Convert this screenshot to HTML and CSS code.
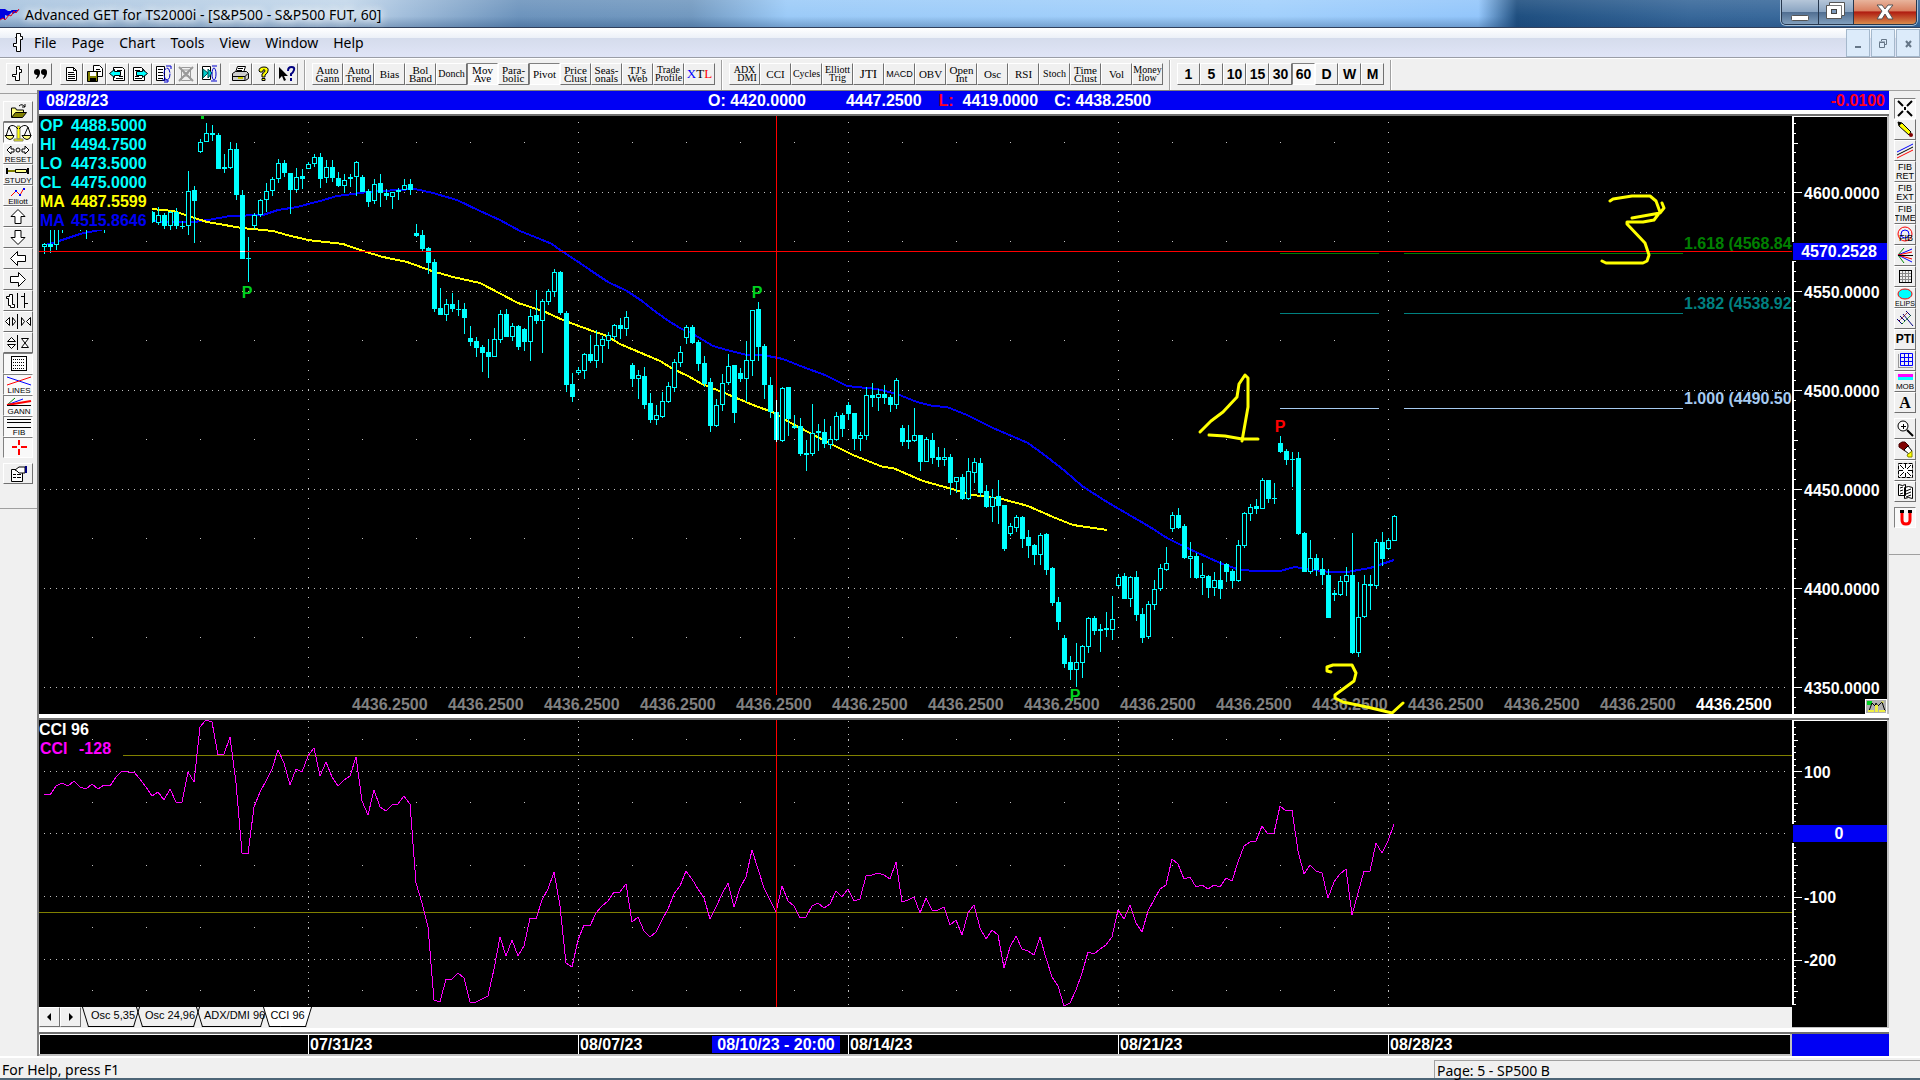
FILE: index.html
```
<!DOCTYPE html>
<html lang="en">
<head>
    <meta charset="UTF-8">
    <meta name="viewport" content="width=device-width, initial-scale=1.0">
    <title>Advanced GET for TS2000i - [S&amp;P500 - S&amp;P500 FUT, 60]</title>
    <link rel="stylesheet" href="styles.css">
</head>
<body>
    <header class="titlebar">
        <svg class="app-icon" width="20" height="16" viewBox="0 0 20 16"><path d="M0 2h5l3 2h5l-5 5-3-1v4H0z" fill="#0000e0"/><path d="M11 3h8l-6 4z" fill="#0000e0"/><path d="M0 13l3-2 2 2 4-5 2 1 3-5 2 2 3-4" fill="none" stroke="#e00020"/></svg>
        <h1 class="title">Advanced GET for TS2000i - [S&amp;P500 - S&amp;P500 FUT, 60]</h1>
        <div class="caption-buttons">
            <button class="cap cap-min" aria-label="Minimize"><svg width="36" height="28" viewBox="0 0 36 28"><rect x="9.500" y="17.500" width="17" height="5" rx="1" fill="#fff" stroke="#555"/></svg></button>
            <button class="cap cap-max" aria-label="Restore"><svg width="34" height="28" viewBox="0 0 34 28"><path d="M10.500 4.500h15v13h-3v3h-15v-13h3z" fill="#fff" stroke="#555"/><path d="M10.500 7.500h12v10" fill="none" stroke="#777"/><rect x="12.500" y="11.500" width="5" height="4" fill="#7c99bb" stroke="#444"/></svg></button>
            <button class="cap cap-close" aria-label="Close"><svg width="62" height="28" viewBox="0 0 62 28"><path d="M23 7h5l3 4 3-4h5l-5 6 5 8h-5l-3-5-3 5h-5l5-8z" fill="#fff" stroke="#555"/></svg></button>
        </div>
    </header>

    <nav class="menubar">
        <svg width="12" height="20" viewBox="0 0 12 20"><path d="M4.500 4.500h1v-4h4v3h2v3h-2v12h-4v-5h-3v-3h3v-6z" fill="#fff" stroke="#000"/></svg>
        <button class="menu">File</button>
        <button class="menu">Page</button>
        <button class="menu">Chart</button>
        <button class="menu">Tools</button>
        <button class="menu">View</button>
        <button class="menu">Window</button>
        <button class="menu">Help</button>
        <div class="mdi-buttons">
            <button class="mdi" aria-label="Minimize chart"><svg width="22" height="26" viewBox="0 0 22 26"><path d="M8 17h6" stroke="#667788" stroke-width="2"/></svg></button>
            <button class="mdi" aria-label="Restore chart"><svg width="22" height="26" viewBox="0 0 22 26"><path d="M9.500 11v-1.500h5v5H13M7.500 12.500h5v5h-5zM7 12h6" fill="none" stroke="#667788"/></svg></button>
            <button class="mdi" aria-label="Close chart"><svg width="22" height="26" viewBox="0 0 22 26"><path d="M9 11l5 6M14 11l-5 6" stroke="#667788" stroke-width="2"/></svg></button>
        </div>
    </nav>

    <div class="toolbar">
        <div class="tool-group">
            <button class="btn" aria-label="Symbol"><svg width="21" height="20" viewBox="0 0 21 20"><path d="M9.500 5.500v-3h3v3h2v3h-2v8h-4v-4h-3v-2h4z" fill="#fff" stroke="#000"/></svg></button>
            <button class="btn" aria-label="Quote"><svg width="21" height="20" viewBox="0 0 21 20"><g fill="#000"><circle cx="7" cy="8" r="3"/><circle cx="14" cy="8" r="3"/><path d="M10 8q0 5-4 7v-1q2-2 1-4zM17 8q0 5-4 7v-1q2-2 1-4z"/></g></svg></button>
        </div>
        <div class="tool-group">
            <button class="btn" aria-label="New"><svg width="21" height="20" viewBox="0 0 21 20"><path d="M5.500 3.500h7l3 3v10h-10z" fill="#fff" stroke="#000"/><path d="M12.500 3.500v3h3M7 8.500h6M7 10.500h7M7 12.500h7M7 14.500h7" fill="none" stroke="#000"/></svg></button>
            <button class="btn" aria-label="Save"><svg width="21" height="20" viewBox="0 0 21 20"><path d="M9.500 1.500h6l3 3v8h-9z" fill="#fff" stroke="#000"/><path d="M12 5.500h4M12 7.500h5" stroke="#000"/><path d="M3.500 7.500h10v10h-10z" fill="#808000" stroke="#000"/><path d="M6 8h6v4H6z" fill="#fff"/><path d="M6 14h6v3H6z"/></svg></button>
            <button class="btn" aria-label="Previous page"><svg width="21" height="20" viewBox="0 0 21 20"><path d="M6.500 3.500h9l2 2v11h-11z" fill="#fff" stroke="#000"/><path d="M10 6.500h5M12 12.500h4M9 14.500h7" stroke="#000"/><path d="M2.500 9.500l5-4v2h6v4h-6v2z" fill="#0ff" stroke="#000"/></svg></button>
            <button class="btn" aria-label="Next page"><svg width="21" height="20" viewBox="0 0 21 20"><path d="M3.500 3.500h8l3 3v10h-11z" fill="#fff" stroke="#000"/><path d="M5 6.500h5M5 12.500h4M5 14.500h7" stroke="#000"/><path d="M17.500 9.500l-5-4v2h-6v4h6v2z" fill="#0ff" stroke="#000"/></svg></button>
            <button class="btn" aria-label="Cycle page"><svg width="21" height="20" viewBox="0 0 21 20"><path d="M3.500 2.500h8v14h-8z" fill="#fff" stroke="#000"/><path d="M5 5.500h5M5 8.500h5M5 11.500h5M5 14.500h5" stroke="#000"/><ellipse cx="14" cy="10" rx="3" ry="6" fill="none" stroke="#0000d0" stroke-dasharray="6 1"/><path d="M9 16h6v2h-4M13 2h5v3" fill="none" stroke="#0000d0"/></svg></button>
            <button class="btn" aria-label="Delete page"><svg width="21" height="20" viewBox="0 0 21 20"><path d="M5.500 3.500h9v13h-9zM7 6h6M7 9h6M7 12h6" fill="none" stroke="#999"/><path d="M3 3l14 14M17 3L3 17" stroke="#999" stroke-width="2"/></svg></button>
            <button class="btn" aria-label="Page set"><svg width="21" height="20" viewBox="0 0 21 20"><path d="M3.500 2.500h8v13h-8z" fill="#fff" stroke="#000"/><path d="M4 5l5 4-5 5zM9 5l4 4-4 5z" fill="#0cc" stroke="#055"/><ellipse cx="15" cy="10" rx="2" ry="6" fill="none" stroke="#0000d0"/><path d="M12 17h6M13 2h5" stroke="#0000d0"/></svg></button>
        </div>
        <div class="tool-group">
            <button class="btn" aria-label="Print"><svg width="21" height="20" viewBox="0 0 21 20"><path d="M7.500 2.500h8l-2 6h-8z" fill="#fff" stroke="#000"/><path d="M8 4.500h5M7 6.500h5" stroke="#000"/><path d="M2.500 9.500l3-2h11l2 2v5l-3 2h-13z" fill="#ccc" stroke="#000"/><path d="M3 12.500h12l3-3M15 12v4" fill="none" stroke="#000"/><path d="M8 14h5" stroke="#cc0" stroke-width="2"/></svg></button>
            <button class="btn" aria-label="Help topics"><svg width="21" height="20" viewBox="0 0 21 20"><path d="M6 7q0-4 5-4t4 4q0 2-3 4v2H9v-3q3-2 3-3 0-2-2-1v2H7z" fill="#ff0" stroke="#000"/><path d="M9 14.500h3v2H9z" fill="#ff0" stroke="#000"/></svg></button>
            <button class="btn" aria-label="Context help"><svg width="21" height="20" viewBox="0 0 21 20"><path d="M3 3v12l3-3 2 5 2-1-2-4h4z"/><path d="M12 7q0-4 3.500-4T18 6t-3 4v2M15 14v3" fill="none" stroke="#000080" stroke-width="2"/></svg></button>
        </div>
        <span class="separator"></span>
        <div class="tool-group">
            <button class="btn study">Auto<br>Gann</button>
            <button class="btn study">Auto<br>Trend</button>
            <button class="btn study">Bias</button>
            <button class="btn study">Bol<br>Band</button>
            <button class="btn study small">Donch</button>
            <button class="btn study pressed">Mov<br>Ave</button>
            <button class="btn study">Para-<br>bolic</button>
            <button class="btn study pressed">Pivot</button>
            <button class="btn study">Price<br>Clust</button>
            <button class="btn study">Seas-<br>onals</button>
            <button class="btn study">TJ's<br>Web</button>
            <button class="btn study small">Trade<br>Profile</button>
            <button class="btn study large"><span><span class="blue">X</span>T<span class="red">L</span></span></button>
        </div>
        <span class="separator"></span>
        <div class="tool-group">
            <button class="btn study small">ADX<br>&nbsp;&nbsp;DMI</button>
            <button class="btn study">CCI</button>
            <button class="btn study small">Cycles</button>
            <button class="btn study small">Elliott<br>Trig</button>
            <button class="btn study large">JTI</button>
            <button class="btn study macd">MACD</button>
            <button class="btn study">OBV</button>
            <button class="btn study">Open<br>Int</button>
            <button class="btn study">Osc</button>
            <button class="btn study">RSI</button>
            <button class="btn study small">Stoch</button>
            <button class="btn study">Time<br>Clust</button>
            <button class="btn study">Vol</button>
            <button class="btn study small">Money<br>flow</button>
        </div>
        <span class="separator"></span>
        <div class="tool-group">
            <button class="btn period">1</button>
            <button class="btn period">5</button>
            <button class="btn period">10</button>
            <button class="btn period">15</button>
            <button class="btn period">30</button>
            <button class="btn period pressed">60</button>
            <button class="btn period">D</button>
            <button class="btn period">W</button>
            <button class="btn period">M</button>
        </div>
        <span class="separator"></span>
    </div>

    <main class="workspace">
        <aside class="side side-left">
            <button class="side-btn" aria-label="Open"><svg width="28" height="19" viewBox="0 0 28 19"><path d="M7.500 15v-9h4l1 2h7v3" fill="#ffff80" stroke="#000"/><path d="M7.500 15.500l4-5h11l-4 5z" fill="#808000" stroke="#000"/><path d="M15 4q3-3 6 1M21 2v3h-3" fill="none" stroke="#000"/></svg></button>
            <button class="side-btn pressed" aria-label="Scales"><svg width="28" height="19" viewBox="0 0 28 19"><path d="M13 3h3v13h-3zM10 16h9v2h-9z" fill="#ff0" stroke="#886"/><path d="M14 6Q9 0 5 4L2 13M5 4l4 9M15 6Q20 0 24 4l-4 9M24 4l3 9" fill="none" stroke="#000"/><path d="M1 12.500h9q-1 4-4 4t-5-4zM18 12.500h9q-1 4-4 4t-5-4z" fill="#ffff80" stroke="#000"/></svg></button>
            <button class="side-btn" aria-label="Reset"><svg width="28" height="19" viewBox="0 0 28 19"><path d="M7 2L3 6l4 4V8h3V5H7zM21 2l4 4-4 4V8h-3V5h3z" fill="#fff" stroke="#000"/><circle cx="14" cy="6" r="2" fill="none" stroke="#000"/><text class="t8" x="14" y="18">RESET</text></svg></button>
            <button class="side-btn" aria-label="Study"><svg width="28" height="19" viewBox="0 0 28 19"><path d="M3 3v6M3 6h8" stroke="#000" stroke-width="2"/><path d="M4 6h7" stroke="#ff0"/><path d="M11.500 4.500h11v3h-11z" fill="#ff8" stroke="#000"/><path d="M24 3v6" stroke="#000" stroke-width="2"/><text class="t8" x="14" y="18">STUDY</text></svg></button>
            <button class="side-btn" aria-label="Elliott"><svg width="28" height="19" viewBox="0 0 28 19"><path d="M7 10l5-5 4 4 4-7" fill="none" stroke="#f00"/><path d="M11 4h2v2h-2zM15 8h2v2h-2zM19 2h2v2h-2z" fill="#00f"/><text class="t8" x="14" y="18">Elliott</text></svg></button>
            <button class="side-btn" aria-label="Scroll up"><svg width="28" height="19" viewBox="0 0 28 19"><path d="M14 2.500l7 7h-4v7h-6v-7H7z" fill="#fff" stroke="#000"/></svg></button>
            <button class="side-btn" aria-label="Scroll down"><svg width="28" height="19" viewBox="0 0 28 19"><path d="M14 16.500l7-7h-4v-7h-6v7H7z" fill="#fff" stroke="#000"/></svg></button>
            <button class="side-btn" aria-label="Scroll left"><svg width="28" height="19" viewBox="0 0 28 19"><path d="M6.500 9.500l7-7v4h8v6h-8v4z" fill="#fff" stroke="#000"/></svg></button>
            <button class="side-btn" aria-label="Scroll right"><svg width="28" height="19" viewBox="0 0 28 19"><path d="M21.500 9.500l-7-7v4h-8v6h8v4z" fill="#fff" stroke="#000"/></svg></button>
            <button class="side-btn" aria-label="Bar width"><svg width="28" height="19" viewBox="0 0 28 19"><path d="M2.500 5.500h3v-2h3v10h2v3h-4v-2h-2v-7h-2z" fill="#fff" stroke="#000"/><path d="M13.500 2v15M20.500 2v15M17 5.500h3M21 12.500h3" stroke="#000"/></svg></button>
            <button class="side-btn" aria-label="Expand horizontally"><svg width="28" height="19" viewBox="0 0 28 19"><path d="M5.500 5.500v8l-4-4zM8.500 5.500v8l3-4zM17.500 5.500v8l3-4zM26.500 5.500v8l-4-4z" fill="#fff" stroke="#000"/><path d="M13.500 2v15" stroke="#000"/></svg></button>
            <button class="side-btn" aria-label="Expand vertically"><svg width="28" height="19" viewBox="0 0 28 19"><path d="M3.500 8.500h8l-4-4zM3.500 11.500h8l-4 4zM17.500 5.500h7l-7 9h7z" fill="#fff" stroke="#000"/><path d="M13.500 2v15" stroke="#000"/></svg></button>
            <button class="side-btn pressed" aria-label="Grid"><svg width="28" height="19" viewBox="0 0 28 19"><rect x="7.500" y="2.500" width="15" height="14" fill="#fff" stroke="#000"/><path d="M9 5.500h12M9 8.500h12M9 11.500h12M9 14.500h12" stroke="#000" stroke-dasharray="1 1"/></svg></button>
            <button class="side-btn pressed" aria-label="Lines"><svg width="28" height="19" viewBox="0 0 28 19"><path d="M3 2l24 8" stroke="#00f"/><path d="M3 10l24-8" stroke="#f00"/><text class="t8" x="15" y="18">LINES</text></svg></button>
            <button class="side-btn pressed" aria-label="Gann"><svg width="28" height="19" viewBox="0 0 28 19"><path d="M3 9l8-7" stroke="#080"/><path d="M3 9l16-6" stroke="#00f"/><path d="M3 9l24-4" stroke="#f00" stroke-width="2"/><path d="M3 9.500h24" stroke="#000"/><text class="t8" x="15" y="18">GANN</text></svg></button>
            <button class="side-btn pressed" aria-label="Fibonacci"><svg width="28" height="19" viewBox="0 0 28 19"><path d="M3 2.500h24M3 5.500h24M3 10.500h24" stroke="#000"/><text class="t8" x="15" y="18">FIB</text></svg></button>
            <button class="side-btn pressed" aria-label="Crosshair"><svg width="28" height="19" viewBox="0 0 28 19"><path d="M15 2v5M15 11v6M8 9h5M17 9h6" stroke="#f00" stroke-width="2"/></svg></button>
            <button class="side-btn after-gap" aria-label="Properties"><svg width="28" height="19" viewBox="0 0 28 19"><path d="M7.500 5.500h11v12h-11z" fill="#fff" stroke="#000"/><path d="M9 10.500h3M13 10.500h4M9 13.500h3M13 13.500h4" stroke="#000"/><path d="M11 6l4-3h6v6h-6l-2-2z" fill="#fff" stroke="#000"/><path d="M22 2v7" stroke="#000080" stroke-width="2"/></svg></button>
        </aside>

        <section class="charts">
            <div class="quote-bar">
                <span class="quote-date">08/28/23</span>
                <div class="quote-values">
                    <span>O: 4420.0000</span>
                    <span class="high">4447.2500</span>
                    <span><span class="alert">L:</span>&nbsp; 4419.0000</span>
                    <span>C: 4438.2500</span>
                </div>
                <span class="alert quote-change">-0.0100</span>
            </div>
            <div class="pane price-pane">
                <svg id="price" class="plot"></svg>
                <div class="scale">
                    <svg id="price-scale"></svg>
                    <button class="scale-btn" aria-label="Auto scale"><svg width="20" height="13" viewBox="0 0 20 13"><path d="M1 1h5v4H1z" fill="#00d020"/><path d="M3 11l3-8 3 3 1-3 2 3 4-4 3 9" fill="none" stroke="#000"/><path d="M9 5h3v7H9zM2 10h6v2H2zM13 10h6v2h-6zM15 2l2-1 1 2z" fill="#ee4"/></svg></button>
                </div>
            </div>
            <div class="pane study-pane">
                <div class="study-main">
                    <svg id="cci" class="plot"></svg>
                    <div class="tabs">
                        <button class="arrow" aria-label="Previous tab"><svg width="19" height="18" viewBox="0 0 19 18"><path d="M11 5v8l-4-4z"/></svg></button>
                        <button class="arrow" aria-label="Next tab"><svg width="19" height="18" viewBox="0 0 19 18"><path d="M8 5v8l4-4z"/></svg></button>
                        <button class="tab tab-osc">Osc 5,35</button>
                        <button class="tab tab-slow">Osc 24,96</button>
                        <button class="tab tab-adx">ADX/DMI 96</button>
                        <button class="tab tab-cci active">CCI 96</button>
                    </div>
                </div>
                <div class="scale scale-study"><svg id="cci-scale"></svg></div>
            </div>
            <div class="pane date-pane">
                <svg id="dates" class="plot"></svg>
                <div class="date-corner"></div>
            </div>
        </section>

        <aside class="side side-right">
            <button class="side-btn pressed" aria-label="Pointer"><svg width="20" height="19" viewBox="0 0 20 19"><path d="M3 2l5 5M17 2l-5 5M3 17l5-5M17 17l-5-5" stroke="#000" stroke-width="2"/><path d="M9 8h2v3H9z" fill="#000"/></svg></button>
            <button class="side-btn" aria-label="Pencil"><svg width="20" height="19" viewBox="0 0 20 19"><path d="M3 2l4 1 9 9-2 3L4 6z" fill="#ff0" stroke="#000"/><path d="M3 2l4 1-3 3z"/><circle cx="16" cy="15" r="2" fill="#800000"/></svg></button>
            <button class="side-btn" aria-label="Parallel lines"><svg width="20" height="19" viewBox="0 0 20 19"><path d="M2 11l16-8" stroke="#00f"/><path d="M2 14l16-8" stroke="#000"/><path d="M2 17l16-8" stroke="#f00"/></svg></button>
            <button class="side-btn text-btn">FIB<br>RET</button>
            <button class="side-btn text-btn">FIB<br>EXT</button>
            <button class="side-btn text-btn">FIB<br>TIME</button>
            <button class="side-btn" aria-label="Fibonacci circles"><svg width="20" height="19" viewBox="0 0 20 19"><circle cx="10" cy="9" r="7" fill="none" stroke="#f00"/><circle cx="10" cy="9" r="4" fill="none" stroke="#00f"/><text class="t9" x="11" y="16">FIB</text></svg></button>
            <button class="side-btn" aria-label="Gann fan"><svg width="20" height="19" viewBox="0 0 20 19"><path d="M3 9l6-7M3 9l6 8" stroke="#080"/><path d="M3 9l14-6M3 9l14 7" stroke="#00f"/><path d="M3 9l14-3M3 9l14 4" stroke="#f00"/><path d="M3 9.500h15" stroke="#000" stroke-width="1"/></svg></button>
            <button class="side-btn" aria-label="Gann box"><svg width="20" height="19" viewBox="0 0 20 19"><path d="M7.500 3v12M10.500 3v12M13.500 3v12M4 6.500h12M4 9.500h12M4 12.500h12" stroke="#888"/><rect x="4.500" y="3.500" width="12" height="12" fill="none" stroke="#000"/></svg></button>
            <button class="side-btn" aria-label="Ellipse"><svg width="20" height="19" viewBox="0 0 20 19"><ellipse cx="10" cy="6" rx="7" ry="5" fill="#0ff" stroke="#f00"/><text class="t7" x="10" y="18">ELIPS</text></svg></button>
            <button class="side-btn" aria-label="Regression channels"><svg width="20" height="19" viewBox="0 0 20 19"><path d="M2 10l5 5M5 7l5 5M8 5l10 12M11 2l5 5" stroke="#000080"/><path d="M4 12l9-9" stroke="#800000" stroke-dasharray="2 1"/><path d="M7 15l9-9" stroke="#008000" stroke-dasharray="2 1"/></svg></button>
            <button class="side-btn text-btn pti">PTI</button>
            <button class="side-btn" aria-label="Table"><svg width="20" height="19" viewBox="0 0 20 19"><path d="M3.500 3v14M4 16.500h14" stroke="#999"/><path d="M5.500 2.500h12v12h-12zM9.500 2v12M13.500 2v12M5 6.500h12M5 10.500h12" fill="none" stroke="#00f"/></svg></button>
            <button class="side-btn" aria-label="MOB"><svg width="20" height="19" viewBox="0 0 20 19"><path d="M3 2h15v3H3z" fill="#f0f"/><path d="M3 5h15v3H3z" fill="#0ff"/><text class="t8" x="10" y="17">MOB</text></svg></button>
            <button class="side-btn text-btn letter">A</button>
            <button class="side-btn after-gap" aria-label="Zoom"><svg width="20" height="19" viewBox="0 0 20 19"><circle cx="8" cy="7" r="5" fill="#fff" stroke="#000"/><path d="M6 7.500h5M8.500 5v5" stroke="#000"/><path d="M12 11l6 6" stroke="#000" stroke-width="2"/></svg></button>
            <button class="side-btn" aria-label="Erase"><svg width="20" height="19" viewBox="0 0 20 19"><path d="M4 4l3-2h3l4 4-4 5-6-4z" fill="#800000" stroke="#400"/><path d="M13 6l4 5-3 3-5-4z" fill="#fff" stroke="#000"/><path d="M17 11v6h-4l-1-2z" fill="#ff0" stroke="#880"/></svg></button>
            <button class="side-btn" aria-label="Fit"><svg width="20" height="19" viewBox="0 0 20 19"><path d="M3.500 2.500h14v14h-14z" fill="#fff" stroke="#000" stroke-dasharray="4 1"/><path d="M5 4l4 4M16 4l-4 4M5 15l4-4M16 15l-4-4" stroke="#000"/><path d="M4 9.500h4M13 9.500h4M10.500 3v4M10.500 12v4" stroke="#000"/></svg></button>
            <button class="side-btn" aria-label="Copy page"><svg width="20" height="19" viewBox="0 0 20 19"><path d="M3.500 2.500l4 1 3-1v11h-7zM9.500 5.500l4-1 4 1v11l-4-1-4 1z" fill="#fff" stroke="#000"/><path d="M5 6l3-1M5 9l3-1M5 12l3-1M11 9l5-2M11 12l5-2M11 15l5-2" stroke="#000"/></svg></button>
            <button class="side-btn pressed after-gap" aria-label="Magnet"><svg width="20" height="19" viewBox="0 0 20 19"><path d="M7 5v7q0 4 4 4t4-4V5" fill="none" stroke="#f00" stroke-width="3"/><path d="M5 2h4v3H5zM13 2h4v3h-4z"/></svg></button>
        </aside>
    </main>

    <footer class="statusbar">
        <span class="status-help">For Help, press F1</span>
        <span class="status-page">Page: 5 - SP500 B</span>
    </footer>

    <script src="chart.js"></script>
</body>
</html>
```
FILE: styles.css
```
* {
    box-sizing: border-box;
}
body {
    margin: 0;
    height: 100vh;
    display: flex;
    flex-direction: column;
    overflow: hidden;
    background-color: #f0f0f0;
    color: #000;
    font-family: "Noto Sans", sans-serif;
    font-size: 14px;
}
button {
    margin: 0;
    padding: 0;
    border: none;
    background: none;
    color: inherit;
    font: inherit;
}
svg {
    display: block;
}

/* window frame */
.titlebar {
    display: flex;
    align-items: flex-start;
    flex: none;
    height: 28px;
    border-bottom: 1px solid #30405c;
    background:
        linear-gradient(rgba(255, 255, 255, 0.1), transparent 60%, rgba(20, 60, 110, 0.3)),
        linear-gradient(90deg, #a9c4df 0, #c3d7ea 18%, #a3bfdc 21%, #6d94bd 27%, #7299c0 36%, #9ccbf8 41%, #a2d0fc 66%, #93c6fb 77%, #1f4f80 79%, #38689a 88%, #3b6b9d 100%);
}
.app-icon {
    margin-top: 7px;
}
.title {
    margin: 0 0 0 5px;
    font-size: 14px;
    font-weight: normal;
    line-height: 30px;
    white-space: nowrap;
    text-shadow: 0 0 8px #fff, 0 0 8px #fff;
}
.caption-buttons {
    display: flex;
    margin-left: auto;
    margin-right: 3px;
    height: 25px;
    border: 1px solid #26374d;
    border-top: none;
    border-radius: 0 0 5px 5px;
    overflow: hidden;
    box-shadow: 0 0 0 1px #a8c0d8;
}
.cap {
    height: 24px;
    background: linear-gradient(#b5c6d9, #8ba5c2 48%, #516f92 52%, #819fbd);
    border-right: 1px solid #26374d;
}
.cap svg {
    margin-top: -2px;
}
.cap-close {
    border-right: none;
    background: linear-gradient(#e8b49c, #d97f60 45%, #b01c10 50%, #d88a4c);
}

/* menu */
.menubar {
    display: flex;
    align-items: center;
    flex: none;
    height: 30px;
    padding-left: 11px;
    background: linear-gradient(#fff, #edf1f8 33%, #d5dcec 36%, #e0e5f7);
    border-bottom: 1px solid #9a9da6;
}
.menu {
    margin-left: 11px;
    line-height: 26px;
}
.menu + .menu {
    margin-left: 15px;
}
.mdi-buttons {
    display: flex;
    gap: 1px;
    margin-left: auto;
}
.mdi {
    border: 1px solid #a4b8cc;
    background-color: #dcebfa;
}

/* top toolbar */
.toolbar {
    display: flex;
    align-items: stretch;
    flex: none;
    height: 32px;
    padding-left: 6px;
    border-top: 1px solid #fff;
}
.tool-group {
    display: flex;
    align-items: flex-start;
    padding-top: 4px;
    margin-right: 8px;
}
.separator {
    width: 2px;
    margin: 1px 6px 0 -2px;
    border-left: 1px solid #a0a0a0;
    border-right: 1px solid #fff;
}
.btn {
    display: flex;
    align-items: center;
    justify-content: center;
    width: 23px;
    height: 22px;
    border: 1px solid;
    border-color: #fff #707070 #707070 #fff;
    overflow: hidden;
}
.btn.pressed,
.side-btn.pressed {
    border-color: #808080 #fff #fff #808080;
    background-color: #f9f9f9;
}
.study {
    width: 31px;
    font-family: "Liberation Serif", serif;
    font-size: 11px;
    line-height: 8px;
}
.study.small {
    font-size: 10px;
}
.study.large {
    font-size: 13px;
}
.study.macd {
    font-family: "Liberation Sans", sans-serif;
    font-size: 9px;
}
.blue {
    color: #00f;
}
.red {
    color: #f00;
}
.period {
    font-family: "Liberation Sans", sans-serif;
    font-size: 14px;
    font-weight: bold;
}

/* side toolbars */
.workspace {
    display: flex;
    flex: 1;
    min-height: 0;
}
.side {
    display: flex;
    flex-direction: column;
    align-self: flex-start;
    flex: none;
    border-top: 1px solid #a0a0a0;
    border-bottom: 1px solid #a0a0a0;
}
.side-left {
    width: 37px;
    margin-top: 3px;
    padding: 7px 4px 24px 3px;
}
.side-right {
    width: 31px;
    padding: 7px 4px 26px 5px;
}
.side-btn {
    display: flex;
    align-items: center;
    justify-content: center;
    height: 21px;
    border: 1px solid;
    border-color: #fff #707070 #707070 #fff;
    overflow: hidden;
}
.after-gap {
    margin-top: 5px;
}
.text-btn {
    font-family: "Liberation Sans", sans-serif;
    font-size: 9px;
    line-height: 9px;
}
.text-btn.pti {
    font-size: 12px;
    font-weight: bold;
}
.text-btn.letter {
    font-family: "Liberation Serif", serif;
    font-size: 16px;
    font-weight: bold;
}
.t7,
.t8,
.t9 {
    font-family: "Liberation Sans", sans-serif;
    text-anchor: middle;
}
.t7 {
    font-size: 7px;
}
.t8 {
    font-size: 8px;
}
.t9 {
    font-size: 9px;
}

/* charts */
.charts {
    display: flex;
    flex-direction: column;
    flex: 1;
    min-width: 0;
    font-family: "Liberation Sans", sans-serif;
    font-size: 16px;
    font-weight: bold;
    border-left: 2px solid #808080;
    background-color: #fff;
}
.quote-bar {
    display: flex;
    flex: none;
    height: 20px;
    padding: 0 4px 0 7px;
    border-top: 1px solid #808080;
    background-color: #0000f4;
    color: #fff;
    line-height: 19px;
}
.quote-date {
    width: 36%;
}
.quote-values {
    display: flex;
    gap: 16px;
}
.high {
    margin: 0 1px 0 24px;
}
.alert {
    color: #ff0020;
}
.quote-change {
    margin-left: auto;
}
.pane {
    display: flex;
    margin-top: 4px;
    border-top: 2px solid #707070;
}
.plot {
    flex: 1;
    min-width: 0;
    width: 100%;
    background-color: #000;
}
.price-pane {
    flex: 1;
    min-height: 0;
}
.study-pane {
    flex: none;
    height: 310px;
}
.study-main {
    display: flex;
    flex-direction: column;
    flex: 1;
    min-width: 0;
}
.scale {
    position: relative;
    flex: none;
    width: 97px;
    border-right: 2px solid #c0c0c0;
    background-color: #000;
}
.scale > svg {
    width: 100%;
    height: 100%;
}
.scale-btn {
    position: absolute;
    right: 0;
    bottom: 0;
    border: 1px solid #fff;
    background-color: #b0b0b0;
}
.scale-study {
    border-bottom: 1px solid #c0c0c0;
}
svg text {
    white-space: pre;
}

/* study tabs */
.tabs {
    display: flex;
    flex: none;
    height: 21px;
    padding-bottom: 1px;
    background-color: #f0f0f0;
    font-size: 11px;
    font-weight: normal;
}
.arrow {
    width: 21px;
    border: 1px solid;
    border-color: #fff #707070 #707070 #fff;
}
.tab {
    position: relative;
    line-height: 14px;
    padding: 0 0 5px 8px;
    text-align: center;
    white-space: nowrap;
}
.tab-osc {
    width: 54px;
    margin-left: 1px;
}
.tab-slow {
    width: 60px;
}
.tab-adx {
    width: 67px;
}
.tab-cci {
    width: 49px;
    padding-left: 0;
}
.tab::before,
.tab::after {
    content: "";
    position: absolute;
    top: 0;
    bottom: 0;
    border-bottom: 1px solid #000;
}
.tab::before {
    left: 3px;
    right: 20px;
    border-left: 1px solid #000;
    transform: skewX(17deg);
}
.tab::after {
    left: 20px;
    right: -1px;
    border-right: 1px solid #000;
    transform: skewX(-17deg);
}
.tab.active {
    z-index: 0;
}
.tab.active::before,
.tab.active::after {
    z-index: -1;
    background-color: #fff;
}
.tab.active::after {
    right: 3px;
}
.date-pane {
    flex: none;
    height: 24px;
}
.date-corner {
    width: 97px;
    background-color: #0000f4;
}

/* status bar */
.statusbar {
    display: flex;
    align-items: stretch;
    flex: none;
    height: 24px;
    border-top: 2px solid #fff;
    border-bottom: 2px solid #4d6577;
    font-size: 14px;
    line-height: 22px;
}
.status-help {
    flex: 1;
    padding-left: 2px;
    line-height: 24px;
}
.status-page {
    width: 486px;
    margin-top: 2px;
    padding-left: 2px;
    border-top: 1px solid #a0a0a0;
    border-left: 1px solid #a0a0a0;
    line-height: 19px;
}
```
FILE: chart.js
```
// Origin of the price plot, all bar values below are in screen rows
const LEFT = 39;
const TOP = 116;
const CCI_TOP = 720;
const BAR_START = 44;
const BAR_STEP = 6;
const CURSOR_BAR = 122;

const _ = null;

// high, body top, body bottom, low, filled
const bars = [
    [243,244,247,254,0],[226,244,247,253,1],[220,222,245,250,0],[220,222,228,233,1],_,_,
    [220,222,228,231,1],[220,222,228,239,1],_,_,[220,222,228,233,1],_,_,_,_,_,_,_,
    [211,212,222,223,1],[207,215,223,225,0],[213,215,226,229,1],[211,212,226,230,0],[208,212,226,229,1],[221,226,227,229,1],
    [171,191,226,235,0],[186,190,201,243,1],[139,142,152,153,0],[123,133,142,142,0],[125,133,135,141,1],[133,135,169,169,1],
    [154,167,169,173,1],[142,149,168,169,0],[143,149,195,200,1],[190,195,259,259,1],[237,258,259,282,1],[213,215,226,229,0],
    [199,200,215,217,0],[183,191,200,212,0],[177,179,191,196,0],[159,163,179,183,0],[160,163,173,177,1],[173,173,190,214,1],
    [168,177,190,192,0],[169,176,179,189,1],[162,164,169,169,0],[154,157,164,167,0],[153,157,179,188,1],[160,167,178,183,0],
    [160,167,178,182,1],[172,178,186,187,1],[174,180,186,193,0],[174,177,179,187,0],[161,162,177,196,0],[175,177,192,192,1],
    [189,191,202,207,1],[179,184,201,204,0],[174,183,193,207,1],[189,193,196,200,1],[192,192,197,209,0],[188,190,192,200,0],
    [179,185,190,190,0],[179,184,190,195,1],[224,233,236,237,1],[230,235,249,251,1],[247,248,263,274,1],[259,262,309,312,1],
    [288,308,315,315,1],[299,304,315,321,0],[293,304,309,312,1],[300,309,310,316,1],[303,309,318,334,1],[326,338,342,346,1],
    [337,341,348,357,1],[345,347,353,372,1],[339,352,357,378,1],[328,339,357,357,0],[310,314,340,343,0],[309,314,337,337,1],
    [323,326,337,341,0],[325,326,347,350,1],[328,329,342,351,1],[309,316,342,361,0],[290,315,321,324,1],[299,301,321,353,0],
    [289,291,302,305,0],[269,272,292,297,0],[271,272,313,315,1],[311,313,385,392,1],[373,384,397,402,1],[367,370,373,375,0],
    [353,354,371,379,0],[335,354,361,363,1],[330,345,361,368,0],[336,339,346,363,0],[332,335,341,349,0],[324,325,337,340,0],
    [318,325,329,339,1],[311,317,329,336,0],[363,365,379,387,1],[370,375,379,399,0],[367,376,405,409,1],[393,403,420,423,1],
    [405,415,420,425,0],[392,401,417,418,0],[382,386,402,403,0],[359,362,388,392,0],[346,352,363,367,0],[325,327,338,344,0],
    [325,327,343,344,1],[340,342,364,371,1],[356,363,384,387,1],[378,382,426,432,1],[399,405,426,427,0],[374,383,405,411,0],
    [354,366,383,385,0],[365,365,413,423,1],[368,373,379,382,1],[341,360,379,402,0],[310,310,361,376,0],[302,309,347,361,1],
    [344,346,385,399,1],[377,385,412,418,1],[400,412,440,442,1],[387,388,441,442,0],[387,387,419,436,1],[415,426,428,429,1],
    [418,426,454,456,1],[440,453,455,471,1],[404,433,454,456,0],[424,431,433,451,1],[419,432,444,448,1],[426,439,445,449,0],
    [412,416,440,441,0],[413,415,429,437,1],[402,405,414,420,1],[413,413,439,450,1],[432,435,439,451,0],[387,395,436,440,0],
    [383,395,398,407,1],[389,394,398,411,0],[385,394,398,404,1],[395,397,405,412,1],[378,380,405,409,0],[425,428,442,446,1],
    [425,440,442,449,1],[408,435,441,442,0],[435,435,462,471,1],[437,439,462,462,0],[433,440,458,464,1],[447,457,460,467,1],
    [448,457,460,466,0],[454,457,483,495,1],[477,477,482,493,0],[474,477,499,500,1],[458,471,499,500,0],[458,462,473,483,0],
    [458,463,493,497,1],[485,491,507,508,1],[489,497,507,522,0],[480,496,506,524,1],[505,505,549,551,1],[523,526,534,536,0],
    [515,517,528,532,0],[516,517,539,548,1],[530,537,546,558,1],[544,545,555,565,1],[533,535,555,565,0],[533,534,570,575,1],
    [567,568,603,606,1],[597,602,622,630,1],[635,638,664,668,1],[656,662,670,680,1],[643,662,670,687,0],[645,646,663,678,0],
    [617,618,647,653,0],[616,618,631,635,1],[624,629,631,652,1],[612,628,630,637,1],[596,619,630,640,0],[574,577,586,587,0],
    [573,576,599,599,1],[576,577,599,607,0],[571,577,615,621,1],[608,614,638,643,1],[601,604,637,639,0],[580,589,605,610,0],
    [564,568,589,591,0],[547,563,570,571,0],[512,515,529,532,0],[508,515,528,529,1],[524,526,558,559,1],[542,556,559,578,0],
    [553,556,578,579,1],[563,575,578,595,0],[575,576,588,598,1],[572,580,588,596,0],[561,580,589,599,1],[563,564,572,582,1],
    [569,571,581,588,1],[540,545,581,582,0],[512,513,546,548,0],[504,507,514,521,0],[499,506,509,514,1],[478,480,509,509,0],
    [480,480,499,503,1],[483,498,499,504,1],[436,443,452,453,1],[449,451,460,465,1],[452,459,460,487,1],[452,458,534,535,1],
    [532,533,572,572,1],[540,558,572,574,0],[554,558,570,576,1],[558,569,575,585,1],[569,575,618,618,1],[590,593,595,601,1],
    [576,581,595,596,0],[567,575,582,596,0],[533,575,653,654,1],[582,617,653,657,0],[575,584,617,618,0],[575,584,586,610,1],
    [539,542,586,588,0],[532,542,559,566,1],[538,540,549,550,0],[515,516,541,541,0]
];

const maSlow = '44,245 50,244 62,240 80,234 104,229 152,221 163,222 194,222 208,220 230,216 263,215 278,210 297,207 320,201 337,196 368,192 397,190 415,189 433,193 457,200 480,211 500,220 520,231 540,239 552,244 560,250 580,263 590,270 608,282 627,291 642,301 652,309 667,320 680,328 693,334 713,346 727,350 747,355 763,355 783,359 803,367 825,375 847,386 877,389 897,394 917,402 933,406 947,407 967,415 993,428 1028,443 1047,457 1065,471 1082,486 1107,502 1150,527 1167,538 1185,547 1220,563 1237,569 1253,571 1280,571 1295,567 1307,569 1330,572 1347,572 1370,568 1394,560';
const maFast = '152,209 173,211 207,222 242,228 273,231 287,235 308,240 343,244 363,251 383,257 407,262 432,271 453,277 480,283 518,303 543,311 563,320 587,329 607,336 620,344 660,361 673,369 688,376 702,384 727,394 753,405 775,413 787,421 810,433 833,445 853,455 883,467 893,468 923,481 952,489 973,495 1002,499 1028,506 1053,517 1073,525 1107,530';

const cci = [
    794,795,786,783,786,781,787,789,784,789,785,786,777,771,772,772,779,787,796,792,800,789,802,802,772,
    782,727,720,722,755,754,737,783,853,854,807,792,781,769,750,763,785,769,772,756,748,776,762,777,786,
    780,776,757,801,815,790,807,811,805,804,796,804,883,903,927,1000,1002,979,979,973,978,1002,1002,999,996,
    969,937,956,940,956,946,918,919,900,889,872,906,963,967,940,925,926,913,906,901,892,892,884,922,917,
    931,937,932,920,909,894,886,871,879,889,898,919,907,894,883,907,888,877,850,869,888,900,912,886,901,
    906,918,917,906,903,908,904,891,897,889,901,899,876,875,873,875,879,862,902,900,897,913,898,910,910,
    907,925,920,935,913,905,928,939,930,935,968,947,936,949,951,955,937,958,977,986,1006,1003,990,973,952,
    954,949,945,937,910,919,905,923,932,911,900,889,885,859,864,879,877,887,885,889,885,887,878,881,862,
    846,842,841,826,834,833,806,811,810,851,874,865,871,873,898,882,874,869,915,893,871,871,843,853,841,824
];

const weeks = [[44, '07/31/23'], [89, '08/07/23'], [134, '08/14/23'], [179, '08/21/23'], [224, '08/28/23']];

const barX = i => BAR_START + BAR_STEP * i;

function rect(x, y, w, h, fill) {
    return `<rect x="${x}" y="${y}" width="${w}" height="${h}" fill="${fill}"/>`;
}

function line(x1, y1, x2, y2, color, dash) {
    return `<path d="M${x1} ${y1}L${x2} ${y2}" stroke="${color}" ${dash ? `stroke-dasharray="${dash}"` : ''} shape-rendering="crispEdges"/>`;
}

function text(x, y, str, color, anchor) {
    return `<text x="${x}" y="${y}" fill="${color}" text-anchor="${anchor || 'start'}">${str}</text>`;
}

function draw(id, top, body) {
    document.getElementById(id).innerHTML = `<g transform="translate(${-LEFT} ${-top})">${body}</g>`;
}

// Sparse dots every nine bars, halfway between the grid rows
function halfDots(y, right) {
    return line(92, y, right, y, '#c0c0c0', '1 53');
}

function drawPrice() {
    const el = document.getElementById('price');
    const right = LEFT + el.clientWidth;
    let s = '';

    for (let y = 192.5; y < 680; y += 99) s += line(44, y, right - 5, y, '#c0c0c0', '1 5');
    s += line(44, 687.5, 1076, 687.5, '#c0c0c0', '1 5') + line(1286, 687.5, right - 5, 687.5, '#c0c0c0', '1 5');
    for (let y = 142.5; y < 680; y += 99) s += halfDots(y, 1394);
    weeks.forEach(w => { s += line(barX(w[0]) + 0.5, 122, barX(w[0]) + 0.5, 690, '#c0c0c0', '1 8.9'); });

    // running last price along the bottom
    for (let i = 0; i < 15; i++) s += text(352 + 96 * i, 710, '4436.2500', i === 14 ? '#fff' : '#808080');

    s += `<polyline points="${maSlow}" fill="none" stroke="#0000f4" stroke-width="2" shape-rendering="crispEdges"/>`;
    s += `<polyline points="${maFast}" fill="none" stroke="#ff0" stroke-width="2" shape-rendering="crispEdges"/>`;

    bars.forEach((b, i) => {
        if (!b) return;
        const x = barX(i);
        s += rect(x, b[0], 1, Math.max(b[1] - b[0], 0), '#0ff') + rect(x, b[2], 1, Math.max(b[3] - b[2], 0), '#0ff');
        if (b[4]) {
            s += rect(x - 2, b[1], 5, b[2] - b[1], '#0ff');
        } else {
            s += `<rect x="${x - 1.5}" y="${b[1] + 0.5}" width="4" height="${b[2] - b[1] - 1}" fill="#000" stroke="#0ff"/>`;
        }
    });

    // projection levels
    [[253, 249, '1.618 (4568.84', '#008000'], [313, 309, '1.382 (4538.92', '#008080'], [408, 404, '1.000 (4490.50', '#a6caf0']].forEach(l => {
        s += line(1280, l[0] + 0.5, 1379, l[0] + 0.5, l[3]) + line(1404, l[0] + 0.5, 1683, l[0] + 0.5, l[3]);
        s += text(1684, l[1], l[2], l[3]);
    });

    // pivots
    s += text(247, 298, 'P', '#00d020', 'middle') + text(757, 298, 'P', '#00d020', 'middle');
    s += text(1075, 701, 'P', '#00d020', 'middle') + text(1280, 432, 'P', '#f00', 'middle');
    s += rect(201, 116, 3, 3, '#00d020');

    // cursor
    s += line(LEFT, 251.5, right, 251.5, '#f00') + line(776.5, TOP, 776.5, 695, '#f00');
    s += rect(240, 251, 5, 1, '#fff') + rect(776, 400, 1, 42, '#fff');

    // data box
    s += rect(LEFT, TOP, 113, 114, '#000');
    [['OP', '4488.5000', '#0ff'], ['HI', '4494.7500', '#0ff'], ['LO', '4473.5000', '#0ff'],
     ['CL', '4475.0000', '#0ff'], ['MA', '4487.5599', '#ff0'], ['MA', '4515.8646', '#0000f4']].forEach((r, i) => {
        s += text(40, 131 + 19 * i, r[0], r[2]) + text(71, 131 + 19 * i, r[1], r[2]);
    });

    // hand-drawn wave labels
    s += '<g fill="none" stroke="#ff0" stroke-width="3" stroke-linejoin="round" stroke-linecap="round">' +
        '<path d="M1200 432L1211 421L1223 412L1237 397L1239 384L1245 375L1248 378L1248 407L1242 441M1209 435L1225 436L1242 439L1258 439"/>' +
        '<path d="M1331 672L1327 671L1327 667L1333 665L1352 665L1356 673L1354 681L1335 695L1335 698L1343 702L1367 707L1392 713L1403 703"/>' +
        '<path d="M1610 201L1613 199L1632 196L1650 196L1656 201L1660 212L1654 220L1643 222L1627 222L1627 224L1645 243L1649 255L1647 261L1643 263L1606 263L1602 261M1662 203L1664 208L1660 213L1632 218"/></g>';
    draw('price', TOP, s);
}

function drawCci() {
    const el = document.getElementById('cci');
    const right = LEFT + el.clientWidth;
    let s = '';
    [771.5, 833.5, 896.5, 959.5].forEach(y => { s += line(44, y, right - 5, y, '#c0c0c0', '1 5'); });
    [739.5, 802.5, 865.5, 927.5, 990.5].forEach(y => { s += halfDots(y, 1394); });
    weeks.forEach(w => { s += line(barX(w[0]) + 0.5, 721, barX(w[0]) + 0.5, 1006, '#c0c0c0', '1 5.28'); });
    s += line(123, 755.5, right, 755.5, '#808000') + line(LEFT, 912.5, right, 912.5, '#808000');
    s += `<polyline points="${cci.map((y, i) => barX(i) + ',' + y).join(' ')}" fill="none" stroke="#f0f" shape-rendering="crispEdges"/>`;
    s += line(776.5, CCI_TOP, 776.5, 1008, '#f00');
    s += text(39, 735, 'CCI 96', '#fff') + text(40, 754, 'CCI', '#f0f') + text(79, 754, '-128', '#f0f');
    draw('cci', CCI_TOP, s);
}

// Ruler ticks; the plot starts at x = 0 here
function ruler(zero, step, from, to) {
    let s = rect(0, from, 2, to - from, '#fff') + rect(0, from, 97, 1, '#fff');
    for (let n = -60; n < 60; n++) {
        const y = Math.round(zero + n * step);
        if (y < from + 3 || y > to) continue;
        s += rect(2, y, n % 10 === 0 ? 8 : n % 5 === 0 ? 4 : 2, 1, '#fff');
    }
    return s;
}

function marker(y, label) {
    return rect(0, y, 97, 19, '#000') + rect(1, y + 1, 96, 17, '#0000f4') + text(47, y + 15, label, '#fff', 'middle');
}

function drawScales() {
    const h = document.getElementById('price-scale').clientHeight;
    let s = ruler(76, 9.9, 0, h);
    ['4600.0000', '4550.0000', '4500.0000', '4450.0000', '4400.0000', '4350.0000'].forEach((p, i) => {
        s += text(12, 83 + 99 * i, p, '#fff');
    });
    document.getElementById('price-scale').innerHTML = s + marker(126, '4570.2528');

    s = ruler(114, 6.28, 0, 285);
    s += text(12, 58, '100', '#fff') + text(12, 183, '-100', '#fff') + text(12, 246, '-200', '#fff');
    document.getElementById('cci-scale').innerHTML = s + marker(104, '0');
}

function drawDates() {
    const el = document.getElementById('dates');
    const right = LEFT + el.clientWidth;
    let s = '';
    weeks.forEach(w => {
        s += line(barX(w[0]) + 0.5, 0, barX(w[0]) + 0.5, 21, '#fff') + text(barX(w[0]) + 2, 16, w[1], '#fff');
    });
    s += rect(712, 2, 128, 17, '#0000f4') + text(barX(CURSOR_BAR), 16, '08/10/23 - 20:00', '#fff', 'middle');
    s += `<path d="M39.5 22V0.5H${right}" fill="none" stroke="#fff"/>` + rect(39, 20, right, 2, '#c0c0c0') + rect(right - 2, 0, 2, 22, '#c0c0c0');
    draw('dates', 0, s);
}

function drawAll() {
    drawPrice();
    drawCci();
    drawScales();
    drawDates();
}

window.addEventListener('resize', drawAll);
drawAll();
```
